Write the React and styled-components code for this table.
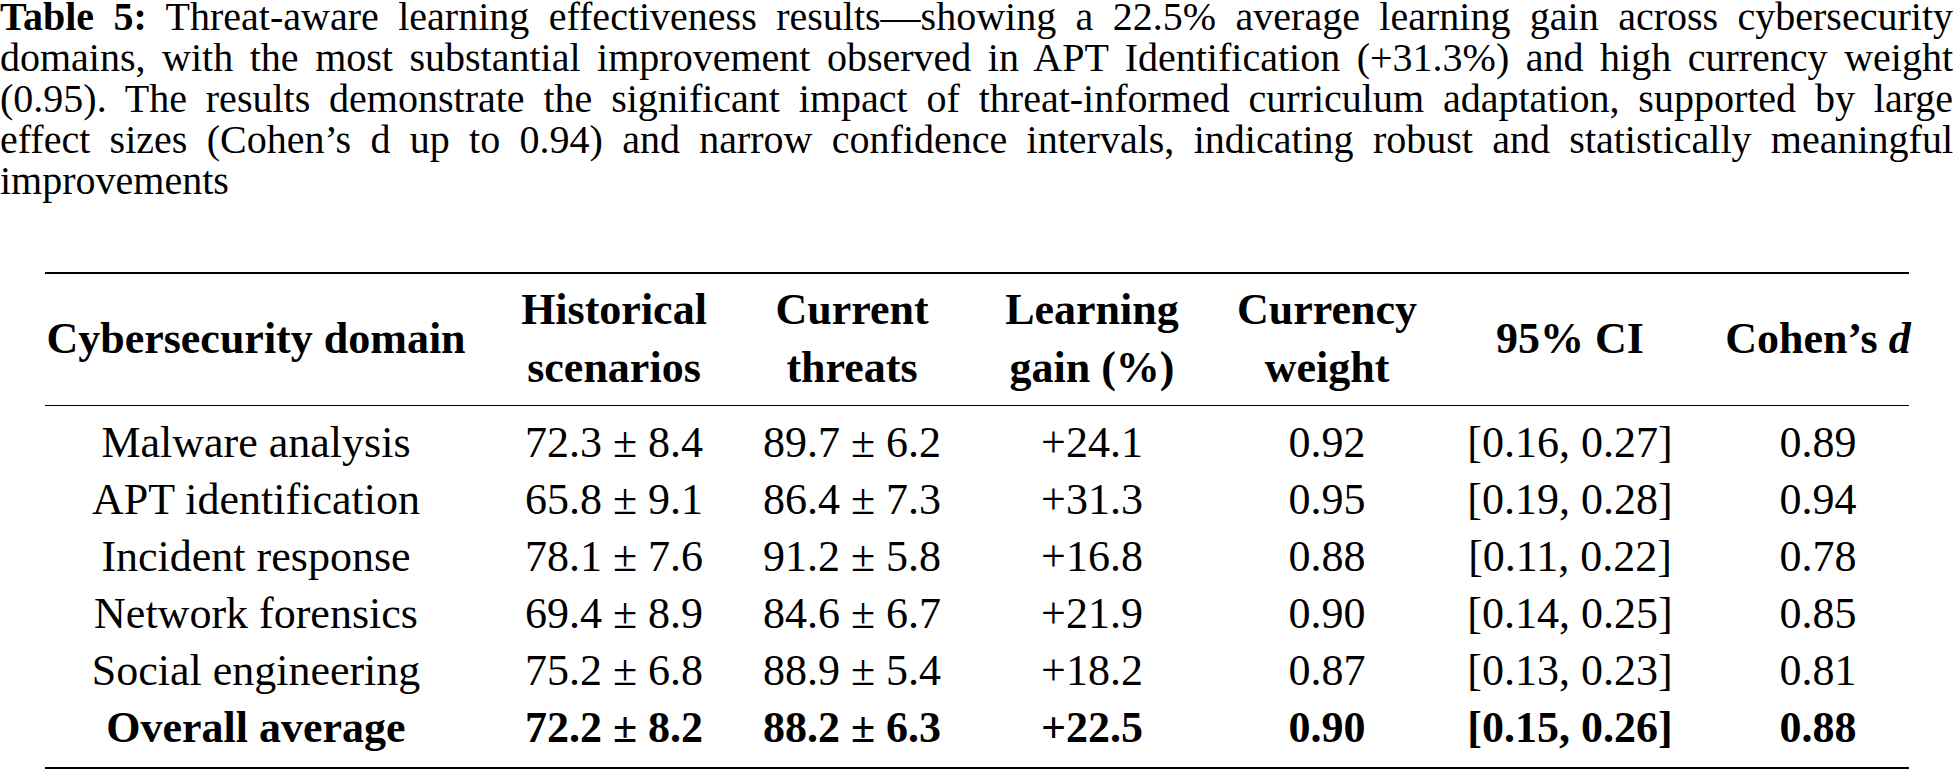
import React from 'react';
import styled, { createGlobalStyle } from 'styled-components';

const GlobalStyle = createGlobalStyle`
  html, body {
    margin: 0;
    padding: 0;
    background: #ffffff;
    color: #000000;
    font-family: "Liberation Serif", "Times New Roman", serif;
  }
`;

// column widths picked so each column centre sits where the reference has it
const COLUMNS = '422px 294px 182px 298px 172px 314px 182px';

const Page = styled.div`
  width: 1953px;
  min-height: 771px;
  background: #ffffff;
`;

const Caption = styled.div`
  font-size: 40px;
  line-height: 41px;
  margin-top: -4px;
`;

const CaptionLine = styled.div`
  text-align: justify;
  text-align-last: ${props => props.$last ? 'left' : 'justify'};
  white-space: nowrap;
`;

const Label = styled.span`
  font-weight: 700;
`;

const Table = styled.div`
  width: 1864px;
  margin: 71px 0 0 45px;
  border-top: 2px solid #000;
  border-bottom: 2px solid #000;
`;

const HeadRow = styled.div`
  display: grid;
  grid-template-columns: ${COLUMNS};
  padding: 7px 0 8px;
  border-bottom: 1.5px solid #000;
`;

const HeadCell = styled.div`
  display: flex;
  align-items: center;
  justify-content: center;
  text-align: center;
  font-size: 44px;
  line-height: 58px;
  font-weight: 700;
  white-space: nowrap;
`;

const Body = styled.div`
  padding: 8px 0 11px;
`;

const Row = styled.div`
  display: grid;
  grid-template-columns: ${COLUMNS};
  font-weight: ${props => props.$bold ? 700 : 400};
`;

const Cell = styled.div`
  display: flex;
  justify-content: center;
  font-size: 44px;
  line-height: 57px;
  white-space: nowrap;
`;

const Italic = styled.i`
  font-style: italic;
`;

const rows = [
  ['Malware analysis', '72.3 ± 8.4', '89.7 ± 6.2', '+24.1', '0.92', '[0.16, 0.27]', '0.89'],
  ['APT identification', '65.8 ± 9.1', '86.4 ± 7.3', '+31.3', '0.95', '[0.19, 0.28]', '0.94'],
  ['Incident response', '78.1 ± 7.6', '91.2 ± 5.8', '+16.8', '0.88', '[0.11, 0.22]', '0.78'],
  ['Network forensics', '69.4 ± 8.9', '84.6 ± 6.7', '+21.9', '0.90', '[0.14, 0.25]', '0.85'],
  ['Social engineering', '75.2 ± 6.8', '88.9 ± 5.4', '+18.2', '0.87', '[0.13, 0.23]', '0.81'],
];

const total = ['Overall average', '72.2 ± 8.2', '88.2 ± 6.3', '+22.5', '0.90', '[0.15, 0.26]', '0.88'];

export default function App() {
  return (
    <Page>
      <GlobalStyle />
      <Caption>
        <CaptionLine>
          <Label>Table 5:</Label> Threat-aware learning effectiveness results—showing a 22.5% average learning gain across cybersecurity
        </CaptionLine>
        <CaptionLine>
          domains, with the most substantial improvement observed in APT Identification (+31.3%) and high currency weight
        </CaptionLine>
        <CaptionLine>
          (0.95). The results demonstrate the significant impact of threat-informed curriculum adaptation, supported by large
        </CaptionLine>
        <CaptionLine>
          effect sizes (Cohen’s d up to 0.94) and narrow confidence intervals, indicating robust and statistically meaningful
        </CaptionLine>
        <CaptionLine $last>improvements</CaptionLine>
      </Caption>

      <Table>
        <HeadRow>
          <HeadCell>Cybersecurity domain</HeadCell>
          <HeadCell>Historical<br />scenarios</HeadCell>
          <HeadCell>Current<br />threats</HeadCell>
          <HeadCell>Learning<br />gain (%)</HeadCell>
          <HeadCell>Currency<br />weight</HeadCell>
          <HeadCell>95% CI</HeadCell>
          <HeadCell>Cohen’s&nbsp;<Italic>d</Italic></HeadCell>
        </HeadRow>
        <Body>
          {rows.map(r => (
            <Row key={r[0]}>
              {r.map((v, i) => <Cell key={i}>{v}</Cell>)}
            </Row>
          ))}
          <Row $bold>
            {total.map((v, i) => <Cell key={i}>{v}</Cell>)}
          </Row>
        </Body>
      </Table>
    </Page>
  );
}
